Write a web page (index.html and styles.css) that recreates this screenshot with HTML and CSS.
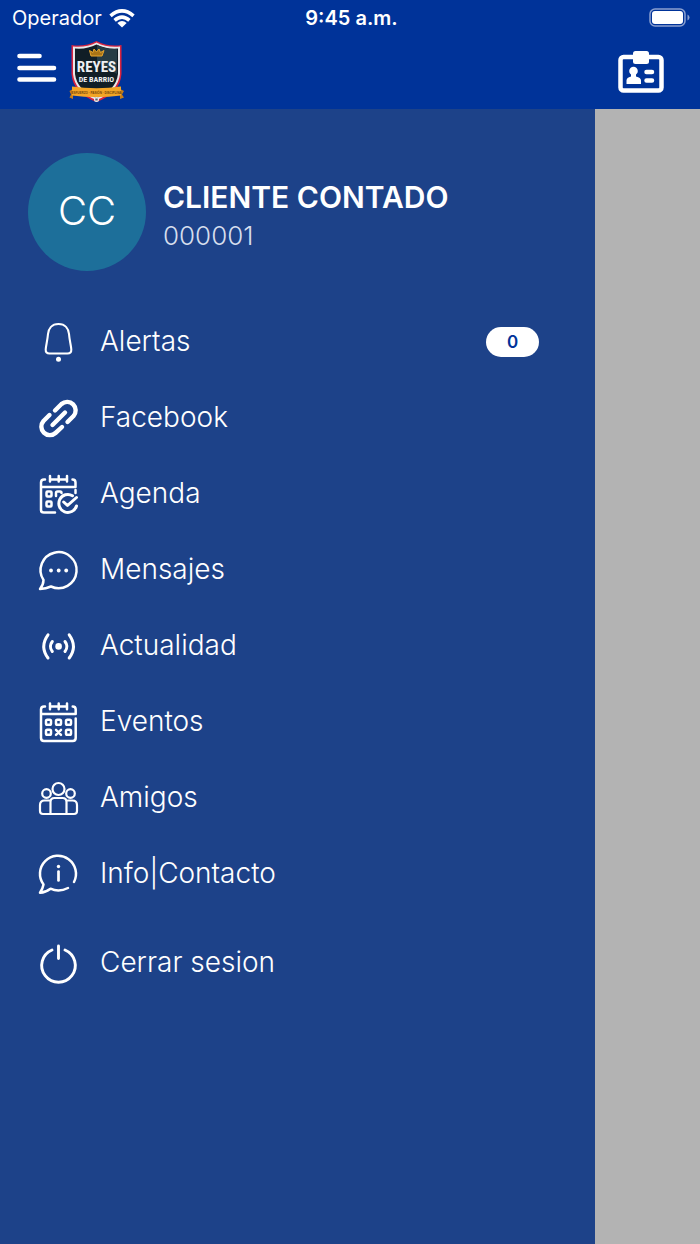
FILE: index.html
```html
<!DOCTYPE html>
<html lang="es">
<head>
<meta charset="utf-8">
<meta name="viewport" content="width=device-width, initial-scale=1">
<title>Reyes de Barrio</title>
<link rel="stylesheet" href="styles.css">
</head>
<body>
<header class="header">
  <div class="status">
    <div class="carrier">
      <span>Operador</span>
      <svg class="wifi" viewBox="0 0 26 19" aria-hidden="true">
        <g fill="none" stroke="#fff" stroke-width="3.6"><path d="M1.500 6.800Q13-3 24.500 6.800"/><path d="M5.600 11.300Q13 4.800 20.400 11.300"/></g>
        <path d="M8.300 14Q13 10 17.700 14L13 18.600Z" fill="#fff"/>
      </svg>
    </div>
    <time class="clock">9:45 a.m.</time>
    <svg class="battery" viewBox="0 0 42 20" aria-hidden="true">
      <rect x="1" y="1" width="35" height="17" rx="5" fill="none" stroke="#8aa0d0" stroke-width="1.500"/>
      <rect x="3" y="3" width="31" height="13" rx="3" fill="#fff"/>
      <path d="M38.500 6.500q2 1 2 3t-2 3z" fill="#8aa0d0"/>
    </svg>
  </div>
  <div class="toolbar">
    <button class="icon-button menu-button" aria-label="Menú">
      <svg class="burger" viewBox="0 0 40 30" aria-hidden="true"><path d="M2.500 3H22.500M2.500 15H37M2.500 26.500H37" stroke="#fff" stroke-width="4.600" stroke-linecap="round"/></svg>
    </button>
    <svg class="logo" viewBox="0 0 56 64" role="img" aria-label="Reyes de Barrio">
      <path d="M2.500 5Q16 7 27.500 1Q39 7 52.500 5V34Q51 53 27.500 62Q4 53 2.500 34Z" fill="#d9233f"/>
      <path d="M4 6.500Q17 8 27.500 2.500Q38 8 51 6.500V34Q49 52 27.500 60Q6 52 4 34Z" fill="#e8e6e8"/>
      <path d="M6 8.500Q18 9.500 27.500 4.500Q37 9.500 49 8.500V34Q47 50 27.500 58Q8 50 6 34Z" fill="#101e26"/>
      <path d="M28 5Q37 9.500 48 9V34L28 22Z" fill="#263c45"/>
      <path d="M22 16L20.500 10.500L24 12.500L25 9L27.500 12L30 9L31.500 12.500L35 10.500L33 16Z" fill="#a97416" stroke="#e7a62d"/>
      <g class="logo-text"><text class="logo-name" x="27.500" y="32">REYES</text><text class="logo-sub" x="27.500" y="42">DE BARRIO</text></g>
      <path d="M.5 51L4 49V59L.5 57.500L2 54.500ZM55 51L51 49V59L55 57.500L53 54.500Z" fill="#c77d17"/>
      <path d="M3 46.500Q27.500 50 52 46.500V55.500Q27.500 58.500 3 55.500Z" fill="#f3a526"/>
      <text class="logo-ribbon" x="27.500" y="53.500">ESFUERZO · PASIÓN · DISCIPLINA</text>
      <circle cx="27.500" cy="59.500" r="2.500" fill="#eee"/><path d="M26.300 58.500h2.400v2h-2.400z" fill="#5b6270"/>
    </svg>
    <button class="icon-button card-button" aria-label="Credencial">
      <svg class="id-card" viewBox="0 0 46 42" aria-hidden="true">
        <rect x="2.500" y="6" width="41" height="33.500" rx="3" fill="none" stroke="#fff" stroke-width="4.500"/>
        <rect x="15" y="0" width="16" height="13" rx="2.500" fill="#fff"/>
        <circle cx="15.500" cy="20" r="4.300" fill="#fff"/>
        <path d="M13 22h5v3.500q5 1 5 4V33H8.500V29.500q0-3 4.500-4Z" fill="#fff"/>
        <path d="M28.500 21H34M28.500 29.500H34" stroke="#fff" stroke-width="4.500" stroke-linecap="round"/>
      </svg>
    </button>
  </div>
</header>
<main class="stage">
  <aside class="drawer">
    <section class="profile">
      <div class="avatar">CC</div>
      <div class="identity">
        <h1 class="name">CLIENTE CONTADO</h1>
        <p class="number">000001</p>
      </div>
    </section>
    <nav class="menu">
      <a class="item" href="#alertas">
        <svg class="icon" viewBox="0 0 40 40" aria-hidden="true"><path d="M20.500 2C13.500 2 10.500 7 10 12C9.400 19 8 23 7.700 27.500Q7.500 31.500 11.500 31.500H29.500Q33.500 31.500 33.300 27.500C33 23 31.600 19 31 12C30.500 7 27.500 2 20.500 2Z" stroke-width="2.100"/><circle class="dot" cx="20.500" cy="37.300" r="2.500"/></svg>
        <span class="label">Alertas</span><span class="badge">0</span>
      </a>
      <a class="item" href="#facebook">
        <svg class="icon" viewBox="0 0 40 40" aria-hidden="true"><path d="M17 12.500L23.500 6A8.500 8.500 0 0 1 35.500 18L29.500 24M11.500 17L5.500 23A8.500 8.500 0 0 0 17.500 35L24 29M14.500 27L27 14.500" stroke-width="4.400"/></svg>
        <span class="label">Facebook</span>
      </a>
      <a class="item" href="#agenda">
        <svg class="icon" viewBox="0 0 40 40" aria-hidden="true"><path d="M7 5.500H6Q3 5.500 3 8.500V36Q3 38.600 6 38.600H17M3 13H37.500V8.500Q37.500 5.500 34.500 5.500M12 5.500H29M12 2V7.500M20.700 2V7.500M29 2V7.500M37.500 16V19"/><rect x="8.500" y="17.500" width="5" height="5" rx="1"/><rect x="8.500" y="27.500" width="5" height="5" rx="1"/><path d="M18 22V19Q18 17.500 19.500 17.500H22Q23.500 17.500 23.500 19"/><path d="M34.500 21.700A9 9 0 1 0 38.500 32M25.700 28L29.500 31.500L38.500 23.500" stroke-width="3"/></svg>
        <span class="label">Agenda</span>
      </a>
      <a class="item" href="#mensajes">
        <svg class="icon" viewBox="0 0 40 40" aria-hidden="true"><path d="M5.500 30A18 18 0 1 1 13 36.500C9.500 38 5.500 38.800 2 39C4 36.500 5.500 33 5.500 30Z"/><g class="dot"><circle cx="13" cy="20.500" r="1.900"/><circle cx="20.700" cy="20.500" r="1.900"/><circle cx="28.200" cy="20.500" r="1.900"/></g></svg>
        <span class="label">Mensajes</span>
      </a>
      <a class="item" href="#actualidad">
        <svg class="icon" viewBox="0 0 40 40" aria-hidden="true"><circle class="dot" cx="20.600" cy="20.400" r="3.300"/><path d="M14.300 15.500Q10.500 20.500 14.300 25.500M27 15.500Q30.800 20.500 27 25.500M10 8.800Q1.500 20.500 10 32M31.200 8.800Q39.700 20.500 31.200 32" stroke-width="3"/></svg>
        <span class="label">Actualidad</span>
      </a>
      <a class="item" href="#eventos">
        <svg class="icon" viewBox="0 0 40 40" aria-hidden="true"><path d="M7 4.500H6Q3 4.500 3 7.500V36Q3 39 6 39H34.700Q37.700 39 37.700 36V16.500M3 12H37.700V7.500Q37.700 4.500 34.700 4.500M12 4.500H29M12 1.500V7.300M20.700 1.500V7.300M29 1.500V7.300"/><rect x="8" y="17.800" width="5" height="5" rx="1.300"/><rect x="18" y="17.800" width="5" height="5" rx="1.300"/><rect x="28" y="17.800" width="5" height="5" rx="1.300"/><rect x="8" y="27.800" width="5" height="5" rx="1.300"/><rect x="28" y="27.800" width="5" height="5" rx="1.300"/><path d="M18 27.800L23 32.800M23 27.800L18 32.800"/></svg>
        <span class="label">Eventos</span>
      </a>
      <a class="item" href="#amigos">
        <svg class="icon" viewBox="0 0 40 40" aria-hidden="true"><g stroke-width="2.200"><circle cx="20.500" cy="11" r="6"/><circle cx="8.500" cy="15.500" r="4.300"/><circle cx="32.500" cy="15.500" r="4.300"/><path d="M12.500 36V24Q12.500 20 16.500 20H24.500Q28.500 20 28.500 24V36M12.500 22.500H6.500Q2 22.500 2 27V33Q2 36 5 36H36Q39 36 39 33V27Q39 22.500 34.500 22.500H28.500"/></g></svg>
        <span class="label">Amigos</span>
      </a>
      <a class="item" href="#info">
        <svg class="icon" viewBox="0 0 40 40" aria-hidden="true"><path d="M36 28A18 18 0 1 0 5.500 30.500C5 33.500 3.500 36.500 2 38.700C6 38.500 9.500 37 12.500 34.700Q21 38.500 30 34"/><path d="M20.500 17.500V26.500" stroke-width="2.700"/><circle class="dot" cx="20.500" cy="12.500" r="1.700"/></svg>
        <span class="label">Info|Contacto</span>
      </a>
      <a class="item logout" href="#salir">
        <svg class="icon" viewBox="0 0 40 40" aria-hidden="true"><path d="M14 7A16.800 16.800 0 1 0 27 7M20.500 3V15.500" stroke-width="2.900"/></svg>
        <span class="label">Cerrar sesion</span>
      </a>
    </nav>
  </aside>
</main>
</body>
</html>
```
FILE: styles.css
```css
* { box-sizing: border-box; }

body {
  display: flex;
  flex-direction: column;
  min-height: 100vh;
  margin: 0;
  background: #b3b3b3;
  color: #fff;
  font-family: Inter, "Liberation Sans", sans-serif;
}

.header { background: #039; padding-bottom: 1px; }

.status {
  display: grid;
  grid-template-columns: 1fr auto 1fr;
  align-items: center;
  height: 36px;
  padding: 0 9px 0 12px;
  font-size: 20px;
  line-height: 24px;
}

.carrier { display: flex; align-items: center; gap: 7px; }
.wifi { width: 26px; height: 19px; }
.clock { font-weight: 600; }
.battery { justify-self: end; width: 42px; height: 20px; }

.toolbar {
  display: flex;
  align-items: center;
  gap: 12px;
  height: 72px;
  padding: 0 36px 0 17px;
}

.icon-button {
  display: flex;
  padding: 0;
  border: 0;
  background: none;
}

.menu-button { padding-bottom: 8px; }
.burger { width: 40px; height: 30px; }
.logo { width: 56px; height: 64px; }
.card-button { margin-left: auto; }
.id-card { width: 46px; height: 42px; }

.logo-text, .logo-ribbon { text-anchor: middle; font-weight: 700; }
.logo-text { fill: #eef0f2; font-family: "Roboto Condensed", Roboto, sans-serif; }
.logo-name { font-size: 15px; }
.logo-sub { font-size: 8px; }
.logo-ribbon { fill: #70430c; font-family: "Liberation Sans", sans-serif; font-size: 3px; }

.stage { display: flex; flex: 1; }

.drawer {
  width: 85%;
  padding: 44px 56px 44px 28px;
  background: #1d4289;
}

.profile { display: flex; align-items: center; gap: 17px; }

.avatar {
  display: grid;
  place-items: center;
  width: 118px;
  height: 118px;
  padding-bottom: 4px;
  border-radius: 50%;
  background: #1d6f9a;
  font-size: 40px;
  font-weight: 300;
}

.identity { padding-top: 8px; }
.name { margin: 0; font-size: 30px; font-weight: 600; line-height: 34px; }
.number { margin: 6px 0 0; color: #d6deed; font-size: 26px; font-weight: 300; line-height: 32px; }

.menu { padding: 33px 0 0 10px; }

.item {
  display: flex;
  align-items: center;
  gap: 22px;
  height: 76px;
  color: #fff;
  font-size: 28px;
  font-weight: 300;
  line-height: 36px;
  text-decoration: none;
}

.label { padding-bottom: 2px; }

.icon {
  width: 40px;
  height: 40px;
  overflow: visible;
  fill: none;
  stroke: #fff;
  stroke-width: 2.5px;
  stroke-linecap: round;
  stroke-linejoin: round;
}

.icon .dot { fill: #fff; stroke: none; }

.badge {
  width: 53px;
  margin-left: auto;
  border-radius: 15px;
  background: #fff;
  color: #039;
  font-size: 17px;
  font-weight: 600;
  line-height: 30px;
  text-align: center;
}

.logout { margin-top: 13px; }
```
